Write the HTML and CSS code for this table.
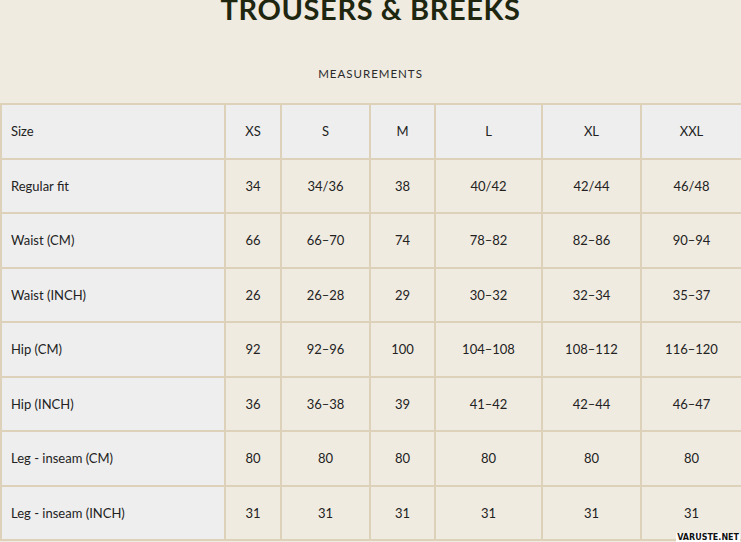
FILE: index.html
```html
<!DOCTYPE html>
<html lang="en">
<head>
<meta charset="utf-8">
<title>Trousers &amp; Breeks</title>
<link rel="stylesheet" href="styles.css">
</head>
<body>
<div class="page">
  <h1 class="title">TROUSERS &amp; BREEKS</h1>
  <div class="subtitle">MEASUREMENTS</div>
  <table class="sizes">
    <colgroup>
      <col class="c0"><col class="c1"><col class="c2"><col class="c3"><col class="c4"><col class="c5"><col class="c6">
    </colgroup>
    <tr class="head"><td>Size</td><td>XS</td><td>S</td><td>M</td><td>L</td><td>XL</td><td>XXL</td></tr>
    <tr><td>Regular fit</td><td>34</td><td>34/36</td><td>38</td><td>40/42</td><td>42/44</td><td>46/48</td></tr>
    <tr><td>Waist (CM)</td><td>66</td><td>66–70</td><td>74</td><td>78–82</td><td>82–86</td><td>90–94</td></tr>
    <tr><td>Waist (INCH)</td><td>26</td><td>26–28</td><td>29</td><td>30–32</td><td>32–34</td><td>35–37</td></tr>
    <tr><td>Hip (CM)</td><td>92</td><td>92–96</td><td>100</td><td>104–108</td><td>108–112</td><td>116–120</td></tr>
    <tr><td>Hip (INCH)</td><td>36</td><td>36–38</td><td>39</td><td>41–42</td><td>42–44</td><td>46–47</td></tr>
    <tr><td>Leg - inseam (CM)</td><td>80</td><td>80</td><td>80</td><td>80</td><td>80</td><td>80</td></tr>
    <tr><td>Leg - inseam (INCH)</td><td>31</td><td>31</td><td>31</td><td>31</td><td>31</td><td>31</td></tr>
  </table>
  <div class="watermark">VARUSTE.NET</div>
</div>
</body>
</html>
```

FILE: styles.css
```css
html, body {
  margin: 0;
  padding: 0;
  background: #efebe1;
}
.page {
  position: relative;
  width: 741px;
  height: 542px;
  overflow: hidden;
  font-family: Lato, "Noto Sans", sans-serif;
  color: #222;
}
.title {
  margin: -8px 0 0 0;
  font-size: 29px;
  line-height: 34px;
  font-weight: 700;
  text-align: center;
  color: #1e2610;
  letter-spacing: 0.6px;
}
.subtitle {
  margin-top: 41px;
  text-align: center;
  font-size: 11.5px;
  line-height: 14px;
  letter-spacing: 1px;
  color: #2a2a2a;
}
.sizes {
  margin-top: 22px;
  width: 741px;
  border-collapse: collapse;
  table-layout: fixed;
  font-size: 13px;
}
.c0 { width: 224px; }
.c1 { width: 56px; }
.c2 { width: 89px; }
.c3 { width: 65px; }
.c4 { width: 107px; }
.c5 { width: 99px; }
.c6 { width: 101px; }
.sizes td {
  border: 2px solid #ddd2b9;
  height: 52.5px;
  padding: 0;
  text-align: center;
  vertical-align: middle;
  background: #f0ebe1;
  font-weight: 400;
}
.sizes td:first-child {
  text-align: left;
  padding-left: 9px;
  background: #eeeeee;
}
.sizes .head td {
  background: #eeeeee;
}
.watermark {
  position: absolute;
  right: 1px;
  bottom: 0;
  font-family: "DejaVu Sans", sans-serif;
  font-size: 8px;
  font-weight: 700;
  line-height: 9px;
  color: #111;
  background: #fff;
  padding: 0 1px;
}
```
